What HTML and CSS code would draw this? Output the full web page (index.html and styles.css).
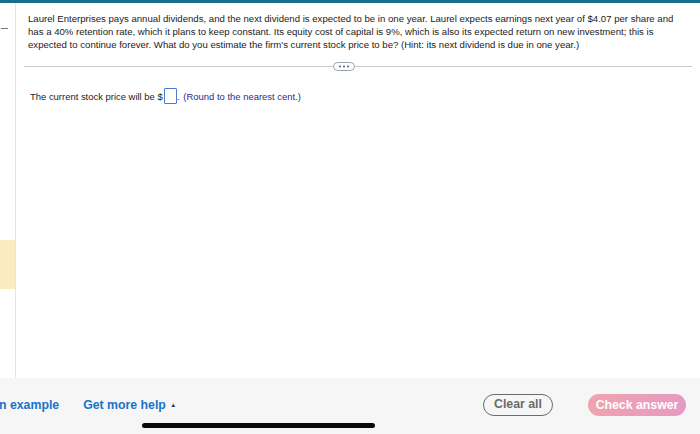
FILE: index.html
```html
<!DOCTYPE html>
<html>
<head>
<meta charset="utf-8">
<link rel="stylesheet" href="styles.css">
</head>
<body>
<div class="topbar"></div>
<div class="main">
  <div class="side">
    <div class="dash"></div>
    <div class="mark"></div>
  </div>
  <div class="content">
    <p class="question">Laurel Enterprises pays annual dividends, and the next dividend is expected to be in one year. Laurel expects earnings next year of $4.07 per share and has a 40% retention rate, which it plans to keep constant. Its equity cost of capital is 9%, which is also its expected return on new investment; this is expected to continue forever. What do you estimate the firm's current stock price to be? (Hint: its next dividend is due in one year.)</p>
    <div class="rule"><span class="pill"><svg width="12" height="3" viewBox="0 0 12 3"><circle cx="2" cy="1.5" r="1" fill="#4a5a7a"/><circle cx="6" cy="1.5" r="1" fill="#4a5a7a"/><circle cx="10" cy="1.5" r="1" fill="#4a5a7a"/></svg></span></div>
    <p class="answer">The current stock price will be $<span class="box"></span>. <span class="hint">(Round to the nearest cent.)</span></p>
  </div>
</div>
<div class="footer">
  <span class="link first">n example</span>
  <span class="link help">Get more help <span class="tri">&#9650;</span></span>
  <span class="spacer"></span>
  <span class="btn clear">Clear all</span>
  <span class="btn check">Check answer</span>
  <div class="home"></div>
</div>
</body>
</html>
```
FILE: styles.css
```css
html, body { margin: 0; padding: 0; }
body {
  width: 700px; height: 434px; overflow: hidden;
  font-family: "Liberation Sans", Arial, sans-serif;
  background: #fff; display: flex; flex-direction: column;
}
.topbar { height: 3px; background: #1b6d8c; flex: none; }
.main { height: 375px; flex: none; display: flex; }
.side {
  width: 15px; flex: none; border-right: 1px solid #e4e4e4;
  position: relative;
}
.dash { position: absolute; left: 1px; top: 25px; width: 7px; height: 1px; background: #777; }
.mark { position: absolute; left: 0; top: 237px; width: 15px; height: 49px; background: #fbecc0; }
.content { flex: 1; padding: 9px 8px 0 12px; }
.question {
  margin: 0; font-size: 9.6px; line-height: 13px; color: #222; width: 655px;
}
.rule { margin: 15px 0 0 -4px; height: 1px; background: #c9c9c9; position: relative; }
.pill {
  position: absolute; left: 309px; top: -4px; width: 20px; height: 7px;
  border: 1px solid #9aa3ad; border-radius: 5px; background: #fff;
  display: flex; align-items: center; justify-content: center;
}
.pill svg { display: block; }
.answer { margin: 21px 0 0 2px; font-size: 9.45px; color: #222; display: flex; align-items: center; }
.box {
  display: inline-block; width: 11px; height: 14px; border: 1.5px solid #4a7bd0;
  margin: 0 0 0 1px; border-radius: 1px;
}
.hint { color: #2b2a8c; margin-left: 4px; }
.footer {
  height: 56px; flex: none; background: #f6f6f6; position: relative;
  display: flex; align-items: flex-start; padding: 16px 14px 0 0; box-sizing: border-box;
}
.link { color: #1a72c9; font-weight: bold; font-size: 12.3px; line-height: 22px; }
.first { margin-left: -1px; }
.help { margin-left: 24px; }
.tri { font-size: 6px; color: #333; vertical-align: 2px; margin-left: 1px; }
.spacer { flex: 1; }
.btn { font-weight: bold; font-size: 12.3px; border-radius: 12px; height: 22px; line-height: 22px; box-sizing: border-box; text-align: center; }
.clear { width: 70px; border: 1.3px solid #6b6b6b; color: #6b6b6b; line-height: 19px; }
.check {
  width: 98px; margin-left: 35px; color: #fff; border-radius: 12px;
  background: linear-gradient(90deg, #f0a3ae, #e59ac2);
}
.home {
  position: absolute; left: 142px; top: 45px; width: 233px; height: 5px;
  border-radius: 3px; background: #0a0a0a;
}
```
